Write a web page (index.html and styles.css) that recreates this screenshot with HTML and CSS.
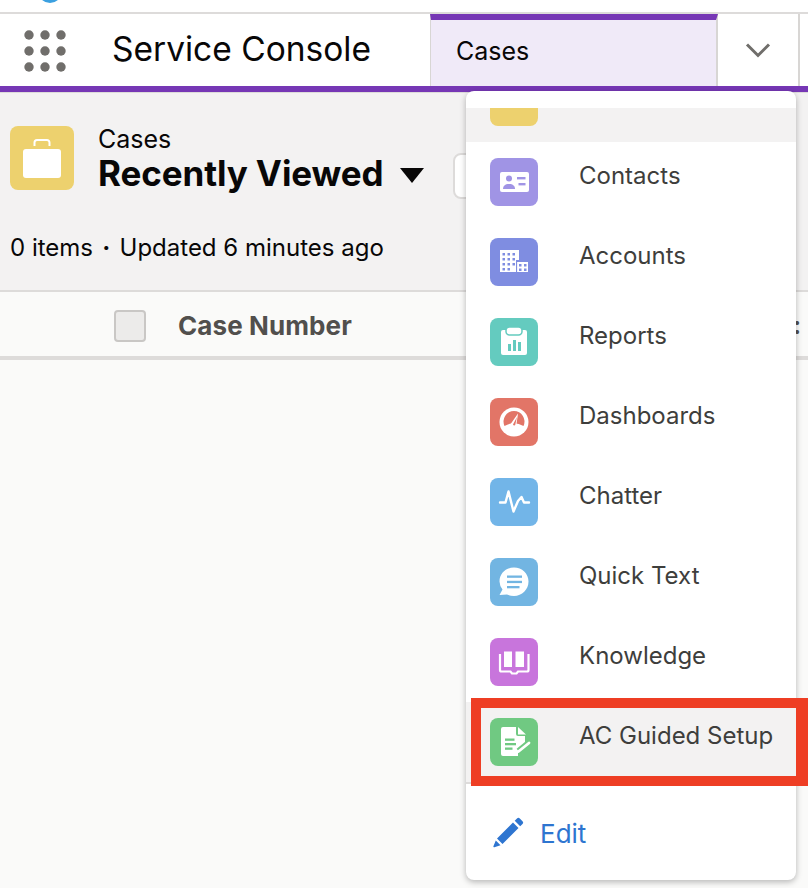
FILE: index.html
```html
<!DOCTYPE html>
<html lang="en">
<head>
<meta charset="utf-8">
<title>Service Console</title>
<link rel="stylesheet" href="styles.css">
</head>
<body>
<div class="page">
  <div class="topbar"><span class="cloud"></span></div>
  <nav class="nav">
    <div class="waffle" aria-label="App launcher">
      <svg width="44" height="44" viewBox="0 0 44 44"><g fill="#706e6b"><circle cx="7" cy="7" r="4.7"/><circle cx="23" cy="7" r="4.7"/><circle cx="39" cy="7" r="4.7"/><circle cx="7" cy="23" r="4.7"/><circle cx="23" cy="23" r="4.7"/><circle cx="39" cy="23" r="4.7"/><circle cx="7" cy="39" r="4.7"/><circle cx="23" cy="39" r="4.7"/><circle cx="39" cy="39" r="4.7"/></g></svg>
    </div>
    <div class="app-name">Service Console</div>
    <div class="tab">Cases</div>
    <div class="tab-more">
      <svg width="26" height="16" viewBox="0 0 26 16"><path d="M2 2.500 13 13.500 24 2.500" fill="none" stroke="#706e6b" stroke-width="3"/></svg>
    </div>
  </nav>
  <header class="list-head">
    <div class="title-row">
      <div class="obj-icon">
        <svg width="38" height="39" viewBox="0 0 38 39"><path d="M11.500 7V3.500A2.500 2.500 0 0 1 14 1h10a2.500 2.500 0 0 1 2.500 2.500V7" fill="none" stroke="#fff" stroke-width="2"/><rect y="10" width="38" height="29" rx="3" fill="#fff"/></svg>
      </div>
      <div class="titles">
        <div class="crumb">Cases</div>
        <div class="view-name">Recently Viewed <span class="caret"></span></div>
      </div>
      <div class="search-stub"></div>
    </div>
    <div class="meta">0 items <span class="dot">·</span> Updated 6 minutes ago</div>
  </header>
  <div class="table-head">
    <span class="checkbox"></span>
    <span class="col">Case Number</span>
    <span class="col-next">:</span>
  </div>
  <main class="table-body"></main>
</div>

<div class="menu">
  <div class="clip-row"><span class="ico yellow"><span class="clip-inner"></span></span></div>
  <div class="item"><span class="ico purple">
    <svg viewBox="0 0 48 48"><rect x="10" y="14" width="29" height="20" rx="2" fill="#fff"/><g fill="#a094e5"><circle cx="19" cy="20.500" r="3"/><path d="M13 31c0-3 2-5 6-5s6 2 6 5z"/><rect x="27" y="19" width="8.500" height="2.400"/><rect x="28.500" y="25" width="7" height="2.400"/></g></svg>
  </span><span class="label">Contacts</span></div>
  <div class="item"><span class="ico indigo">
    <svg viewBox="0 0 48 48"><path d="M10 12h19v10h-3v12H10z" fill="#fff"/><rect x="27" y="24" width="11" height="10" fill="#fff"/><path d="M26 23h1.200v11H26z" fill="#7f8de1" opacity=".5"/><g fill="#7f8de1"><path d="M12.500 15h2.500v2.500h-2.500zM17.500 15H20v2.500h-2.500zM22.500 15H25v2.500h-2.500zM12.500 20H15v2.500h-2.500zM17.500 20H20v2.500h-2.500zM22.500 20H25v2.500h-2.500zM12.500 25H15v2.500h-2.500zM17.500 25H20v2.500h-2.500zM22.500 25H25v2.500h-2.500zM12.500 30H15v2.500h-2.500zM17.500 30H20v2.500h-2.500z"/><path d="M29 26h2.500v2.500H29zM34 26h2.500v2.500H34zM29 30.500h2.500V33H29zM34 30.500h2.500V33H34z"/></g></svg>
  </span><span class="label">Accounts</span></div>
  <div class="item"><span class="ico teal">
    <svg viewBox="0 0 48 48"><path d="M13 12h22a2 2 0 0 1 2 2v21a2 2 0 0 1-2 2H13a2 2 0 0 1-2-2V14a2 2 0 0 1 2-2z" fill="#fff"/><rect x="16" y="9" width="16" height="8" rx="3.500" fill="#fff" stroke="#64cbbf" stroke-width="1.500"/><g fill="#64cbbf"><rect x="18" y="26" width="3" height="7"/><rect x="23" y="22" width="3" height="11"/><rect x="28" y="24" width="3" height="9"/></g></svg>
  </span><span class="label">Reports</span></div>
  <div class="item"><span class="ico red">
    <svg viewBox="0 0 48 48"><circle cx="24" cy="24" r="14.500" fill="#fff"/><path d="M14.500 28A10.500 10.500 0 1 1 33.500 28Q24 22.500 14.500 28z" fill="#e27567"/><path d="M28 15.500 20.800 25.800a3.300 3.300 0 0 0 5.400 2.400z" fill="#fff"/><path d="M27 19 23 26.500a1.300 1.300 0 0 0 2.200.6z" fill="#e27567"/></svg>
  </span><span class="label">Dashboards</span></div>
  <div class="item"><span class="ico sky">
    <svg viewBox="0 0 48 48"><path d="M10 24.500h5.500l3-11 5 20 4.500-10.500 3.500-4 2.500 5.500h5" fill="none" stroke="#fff" stroke-width="2.400" stroke-linecap="round" stroke-linejoin="round"/></svg>
  </span><span class="label">Chatter</span></div>
  <div class="item"><span class="ico sky2">
    <svg viewBox="0 0 48 48"><path d="M24 9.500c8 0 14.500 6 14.500 14S32 38 24 38c-2.500 0-5-.5-7-1.500L9.500 37l3-5.500A13.500 13.500 0 0 1 9.500 23.500C9.500 15.500 16 9.500 24 9.500z" fill="#fff"/><g fill="#72b5e2"><rect x="17" y="17.500" width="15" height="2.300"/><rect x="17" y="22.800" width="15" height="2.300"/><rect x="17" y="28" width="12.500" height="2.300"/></g></svg>
  </span><span class="label">Quick Text</span></div>
  <div class="item"><span class="ico violet">
    <svg viewBox="0 0 48 48"><path d="M14 13.500h8v15.500h-8zM25.500 13.500H34v15.500h-8.500z" fill="#fff"/><path d="M10 16v16a1.500 1.500 0 0 0 1.500 1.500h9l1.500 2h4.500l1.500-2h9a1.500 1.500 0 0 0 1.500-1.500V16" fill="none" stroke="#fff" stroke-width="2.200"/></svg>
  </span><span class="label">Knowledge</span></div>
  <div class="item active"><span class="ico green">
    <svg viewBox="0 0 48 48"><path d="M13 9h13v7a2 2 0 0 0 2 2h7v11.500L28 34v4H13a2 2 0 0 1-2-2V11a2 2 0 0 1 2-2z" fill="#fff"/><path d="M28 9l8 7.500h-8z" fill="#fff"/><g fill="#70c982"><rect x="15" y="20.500" width="9.500" height="2.300"/><rect x="15" y="25" width="11" height="2.300"/><rect x="15" y="29.500" width="7.500" height="2.300"/></g><path d="M28.500 33 39 24.500" stroke="#70c982" stroke-width="6"/><path d="M28.500 33.500 39 25" stroke="#fff" stroke-width="2.800" stroke-linecap="round"/></svg>
  </span><span class="label">AC Guided Setup</span></div>
  <div class="edit-row">
    <svg width="32" height="32" viewBox="0 0 32 32"><path fill="#2e75d0" d="M25 1.500a2 2 0 0 1 2.800 0l2.700 2.700a2 2 0 0 1 0 2.800l-2.300 2.300L22.700 3.800zM21 5.500 26.500 11 10.500 27 5 21.500zM3.800 23.500l4.700 4.700-6.100 2a.8.8 0 0 1-1-1z"/></svg>
    <span class="edit-label">Edit</span>
  </div>
</div>
<div class="callout"></div>
</body>
</html>
```
FILE: styles.css
```css
* { box-sizing: border-box; }
html, body { margin: 0; padding: 0; height: 100%; overflow: hidden; }
body { font-family: Inter, "Noto Sans", sans-serif; color: #080707; background: #fafaf9; position: relative; }
.page { display: flex; flex-direction: column; height: 888px; }
.topbar { height: 14px; background: #fff; border-bottom: 2px solid #dddbda; padding-left: 38px; overflow: hidden; flex: none; }
.cloud { display: block; width: 24px; height: 24px; margin-top: -21px; border-radius: 50%; background: #3ba0e0; }
.nav { height: 78px; display: flex; flex: none; background: #fff; border-bottom: 6px solid #7637b5; box-shadow: 0 1px 0 #dddbda; position: relative; }
.waffle { width: 112px; flex: none; padding: 14px 0 0 22px; }
.waffle svg { display: block; }
.app-name { width: 318px; flex: none; font-size: 33.500px; line-height: 71px; }
.tab { width: 288px; flex: none; border-top: 6px solid #7637b5; border-left: 1px solid #d8d6d4; border-right: 2px solid #d8d6d4; background: #f0eaf8; font-size: 25px; line-height: 62px; padding-left: 25px; }
.tab-more { width: 82px; flex: none; display: flex; align-items: center; justify-content: center; border-right: 2px solid #d8d6d4; }
.list-head { height: 200px; flex: none; background: #f3f2f2; padding: 34px 10px 0; border-bottom: 2px solid #dddbda; }
.title-row { display: flex; align-items: flex-start; }
.obj-icon { width: 64px; height: 64px; flex: none; border-radius: 8px; background: #edd16e; display: flex; align-items: center; justify-content: center; }
.titles { margin-left: 24px; width: 355px; flex: none; }
.crumb { font-size: 25px; line-height: 27px; }
.view-name { font-size: 35px; font-weight: 700; line-height: 40px; letter-spacing: -.1px; display: flex; align-items: center; }
.caret { width: 0; height: 0; margin-left: 17px; margin-top: 4px; border: 12px solid transparent; border-top: 15px solid #080707; border-bottom: 0; }
.search-stub { width: 60px; height: 46px; margin-top: 27px; border: 2px solid #dddbda; border-radius: 8px; background: #fff; }
.meta { margin-top: 33px; font-size: 24px; line-height: 32px; }
.dot { margin: 0 2.500px; font-weight: 700; }
.table-head { height: 68px; flex: none; background: #fafaf9; border-bottom: 4px solid #dddbda; display: flex; align-items: center; padding: 3px 0 0 114px; }
.checkbox { width: 32px; height: 32px; flex: none; border: 2px solid #c9c7c5; border-radius: 4px; background: #ecebea; }
.col { margin-left: 32px; font-size: 26px; font-weight: 700; letter-spacing: .1px; color: #514f4d; flex: 1; }
.col-next { margin-right: 7px; font-size: 24px; font-weight: 700; color: #514f4d; }
.table-body { flex: 1; background: #fafaf9; }
.menu { position: absolute; left: 466px; top: 91px; width: 330px; height: 789px; background: #fff; border-radius: 8px; box-shadow: 0 2px 6px rgba(0,0,0,.28); padding-top: 17px; overflow: hidden; }
.clip-row { height: 34px; background: #f3f2f2; overflow: hidden; padding-left: 24px; display: flex; align-items: flex-end; padding-bottom: 16px; }
.item { height: 80px; display: flex; align-items: flex-start; padding: 16px 0 0 24px; }
.item.active { background: #f3f2f2; border-bottom: 2px solid #dddbda; height: 82px; }
.ico { width: 48px; height: 48px; border-radius: 8px; display: block; flex: none; position: relative; }
.ico svg { width: 48px; height: 48px; display: block; }
.yellow { background: #edd16e; }
.clip-inner { position: absolute; left: 10px; right: 10px; top: 10px; height: 20px; background: #fff; border-radius: 3px; }
.purple { background: #a094e5; }
.indigo { background: #7f8de1; }
.teal { background: #64cbbf; }
.red { background: #e27567; }
.sky { background: #72b5e8; }
.sky2 { background: #72b5e2; }
.violet { background: #c875dc; }
.green { background: #70c982; }
.label { margin-left: 41px; font-size: 24px; line-height: 36px; color: #3e3e3c; }
.edit-row { display: flex; align-items: center; height: 100px; padding: 0 0 2px 26px; }
.edit-label { margin-left: 16px; font-size: 26px; color: #2e75d0; }
.callout { position: absolute; left: 471px; top: 698px; width: 337px; height: 88px; border: 10px solid #ee3e24; border-right-width: 12px; }
```
